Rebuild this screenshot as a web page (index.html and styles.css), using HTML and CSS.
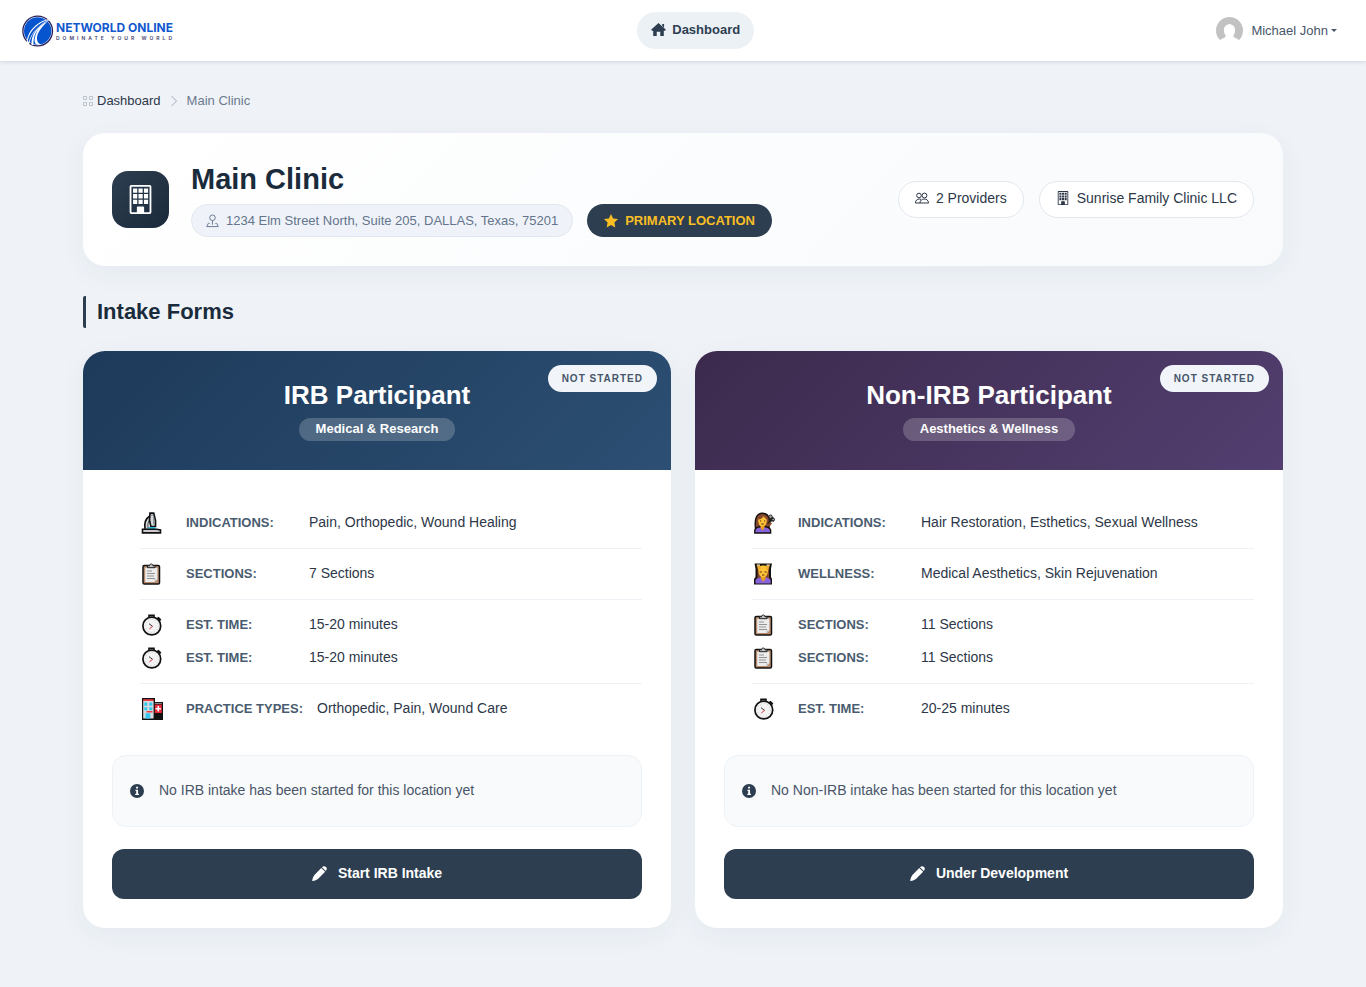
FILE: index.html
```html
<!DOCTYPE html>
<html lang="en">
<head>
<meta charset="utf-8">
<meta name="viewport" content="width=device-width, initial-scale=1">
<title>Main Clinic</title>
<link rel="stylesheet" href="styles.css">
</head>
<body>
<svg class="sprite" aria-hidden="true">
  <symbol id="building" viewBox="0 0 16 16">
    <path fill-rule="evenodd" d="M2 .9A.9.900 0 0 1 2.900 0h10.200a.9.900 0 0 1 .9.900v14.200a.9.900 0 0 1-.9.900H2.900a.9.900 0 0 1-.9-.900zM3 1v14h3v-2.700a.5.500 0 0 1 .5-.500h3a.5.500 0 0 1 .5.500V15h3V1z"/>
    <path d="M3.900 1.900h2.300v2.400H3.900zM6.900 1.900h2.300v2.400H6.900zM9.900 1.900h2.300v2.400H9.900zM3.900 5h2.300v2.400H3.900zM6.900 5h2.300v2.400H6.900zM9.900 5h2.300v2.400H9.900zM3.900 8.100h2.300v2.400H3.900zM6.900 8.100h2.300v2.400H6.900zM9.900 8.100h2.300v2.400H9.900zM6.300 12.200h3.400V16H6.300z"/>
  </symbol>
  <symbol id="pencil" viewBox="0 0 16 16">
    <path d="M9.900 2 14 6.100 6.600 13.500C5.200 14.700 2.900 15.500.6 15.900c-.3 0-.5-.1-.4-.4.5-2.300 1.300-4.600 2.600-6.100z"/>
    <path d="M10.600 1.300C12 0 13.700-.1 14.900 1.100s1.100 2.900-.2 4.300z"/>
  </symbol>
  <symbol id="info" viewBox="0 0 16 16">
    <circle cx="8" cy="8" r="8"/>
    <path class="knock" d="M7 3.200h2.200v2H7zM6.200 6.500h3v4.600h1.100v1.400H6V11.100h1.100V7.900h-.9z"/>
  </symbol>
  <symbol id="microscope" viewBox="0 0 22 22">
    <path d="M9.500 5C5.500 7.500 4.500 12 5.500 17" fill="none" stroke="#111" stroke-width="4.400"/>
    <path d="M9.500 5.500C6 8 5 12 5.800 17" fill="none" stroke="#d2d6da" stroke-width="1.900"/>
    <path d="M9 1.200h3.700l1.800 7.300v6H9.800L8.500 8z" fill="#d6dade" stroke="#111" stroke-width="1.700"/>
    <path d="M10 3.200h2.500M12.700 5.500v7" stroke="#8b9196" stroke-width="1.200"/>
    <path d="M7.500 16h7" stroke="#20b5dd" stroke-width="1.800"/>
    <path d="M1.500 17.300h14l4 .7v2.900h-18z" fill="#c9cdd1" stroke="#111" stroke-width="1.600"/>
  </symbol>
  <symbol id="clipboard" viewBox="0 0 22 22">
    <rect x="2" y="2.500" width="16.500" height="18.500" rx="1.300" fill="#b98a6c" stroke="#111" stroke-width="1.500"/>
    <path d="M4.200 4.700h12.200v11.800L13.800 19H4.200z" fill="#ececec"/>
    <path d="M13.500 19v-2.500H16" fill="#bbb"/>
    <path d="M6.500 4.700V2.800h2C8.700.4 11.800.4 12 2.800h2v1.900z" fill="#bfc3c6" stroke="#222" stroke-width="1"/>
    <path d="M6 8h5M6 10.500h8M6 13h7M6 15.500h8" stroke="#939393" stroke-width="1.100"/>
  </symbol>
  <symbol id="stopwatch" viewBox="0 0 22 22">
    <path d="M8 3.500V1.200h5v2.300M15.800 5l1.700-1.200 1.800 1.700L18 7.200" fill="#aaa" stroke="#111" stroke-width="1.600"/>
    <circle cx="10.800" cy="12" r="8.900" fill="#f3f3f3" stroke="#111" stroke-width="1.700"/>
    <circle cx="10.800" cy="12" r="6.500" fill="none" stroke="#c8c8c8" stroke-width="1" stroke-dasharray="1 2.300"/>
    <path d="M8 9.700l3.500 2.600" stroke="#333" stroke-width="1"/>
    <path d="M11.700 12.200 8.300 15" stroke="#e02b38" stroke-width="1"/>
  </symbol>
  <symbol id="hospital" viewBox="0 0 22 22">
    <path d="M1 0h13v4h8v18H1z" fill="#111"/>
    <path d="M2.200 3h10.400v17.500H2.200z" fill="#d4dbe0"/>
    <path d="M2.200 1.200h10.400V3H2.200zM5.500 13h6v1.600h-6z" fill="#f03c45"/>
    <path d="M3.300 4.500h3v3.200h-3zM8.300 4.500h3v3.200h-3zM3.300 9.200h3v3h-3zM8.300 9.200h3v3h-3zM4.500 15.200h4.800v5.300H4.500z" fill="#35c9ef"/>
    <path d="M13.800 6.500h7v8.500h-7z" fill="#e82939"/>
    <path d="M17.300 8v5.500M14.600 10.700h5.400" stroke="#fff" stroke-width="1.500"/>
    <path d="M13.800 5.400h7" stroke="#8d9499" stroke-width="1"/>
  </symbol>
  <symbol id="haircut" viewBox="0 0 22 22">
    <path d="M2.500 16C1.500 8 3 1.200 9.500 1.200c4 0 6.300 2.300 7 6.800L16 16z" fill="#87482d" stroke="#17110e" stroke-width="1.400"/>
    <path d="M1.800 21v-3c1-3 3.500-3.500 8-3.500s7 1 7.800 3.500v3z" fill="#8764dc" stroke="#17110e" stroke-width="1.400"/>
    <path d="M7.500 13h4v3l-2 2.500-2-2.500z" fill="#e89b20"/>
    <path d="M5.200 7.500C8 7.500 9.500 6 10.500 4.200c1 1.600 2.500 2.200 3.300 3.600 0 4.300-1.700 6.700-4.300 6.700S5.300 12 5.200 7.500z" fill="#ffc337"/>
    <path d="M7 9h1.200M11 9h1.200M8.300 12h2.500" stroke="#543116" stroke-width="1.200"/>
    <path d="m15 12 5.500-6.500M16 6l5 3" stroke="#222" stroke-width="2.200"/>
    <circle cx="17.500" cy="4.700" r="1.700" fill="#aaa" stroke="#222"/><circle cx="20.200" cy="7.500" r="1.300" fill="#aaa" stroke="#222"/>
    <path d="m15.500 14 2.500-3.500" stroke="#8d4b28" stroke-width="2.500"/>
  </symbol>
  <symbol id="massage" viewBox="0 0 22 22">
    <path d="M1.500.500h17.500l-1 5v8.500l1 2v5.500h-18v-5.500l1.500-2V5.500z" fill="#18120f"/>
    <path d="M4.500 17V4.500h11.500V17z" fill="#87482d"/>
    <path d="M2.500 20.500v-3.500c1.200-2 3.500-2.500 7.700-2.500s6.300.5 7.500 2.500v3.500z" fill="#8764dc"/>
    <path d="M8 13h4.500v3l-2.200 2.800L8 16z" fill="#e89b20"/>
    <path d="M5.500 4c2-2 7.500-2 9.500 0 .5 7-1.400 10.300-4.800 10.300S5 11 5.500 4z" fill="#ffc337"/>
    <path d="M3.500 1.700h3.300l1 3.800-2.300 2zM17 1.700h-3.300l-1 3.800 2.300 2z" fill="#efad29"/>
    <path d="M4 2h3M13.500 2h3" stroke="#c9cdd1" stroke-width="1"/>
    <path d="M6.700 9h2.200M11.500 9h2.200M9 12h2.400" stroke="#543116" stroke-width="1.100"/>
  </symbol>
</svg>

<header class="topbar">
  <a class="brand" href="#" aria-label="Networld Online">
    <svg class="brand-mark" viewBox="0 0 33 32" aria-hidden="true">
      <circle cx="15.700" cy="16" r="14.800" fill="#fff" stroke="#29215a" stroke-width="1.300"/>
      <circle cx="15.700" cy="16" r="13.700" fill="#0754cf"/>
      <path d="M4.500 29C5 16 15 5 32 3 20 7.500 9.500 16 7.200 29z" fill="#fff"/>
      <path d="M5.700 26C7.500 16 16 7.500 27 4.500 17.500 9.500 9.500 17 6.800 27z" fill="#0754cf"/>
      <path d="M9.500 30C9 20 14.500 11.500 25.500 6.500 17.500 14 14.500 19.500 15 24.500c.4 3 2 4.500 4.500 5-4.500 1.300-7-.5-7-4.500 1-7 3.500-11.500 7.500-14.500-6 4.500-9 11-8.500 19.500z" fill="#fff"/>
    </svg>
    <span class="brand-text"><span class="brand-name">NETWORLD ONLINE</span><span class="brand-tag">DOMINATE YOUR WORLD</span></span>
  </a>
  <nav class="main-nav">
    <a class="nav-pill" href="#">
      <svg class="icon-home" viewBox="0 0 16 14" aria-hidden="true"><path d="M8 0 16 7.200 15 8.300H13.700V14H9.900V9.500H6.100V14H2.300V8.300H1L0 7.200zM12 1h2v4l-2-2z"/></svg>
      Dashboard
    </a>
  </nav>
  <button class="user" type="button">
    <svg class="avatar" viewBox="0 0 27 27" aria-hidden="true">
      <circle cx="13.500" cy="13.500" r="13.500" fill="#c2c2c2"/>
      <path d="M13.500 7.300c3.500 0 5.600 2.500 5.600 6 0 2.400-.9 4.500-2 5.700 1 2 3.400 2 5.500 3.800l1 4.200H3.400l1-4.200C6.500 21 9 21 10 19c-1.200-1.200-2.100-3.300-2.100-5.700 0-3.500 2.100-6 5.600-6z" fill="#fff"/>
    </svg>
    Michael John<span class="caret"></span>
  </button>
</header>

<main class="page">
  <nav class="crumbs" aria-label="Breadcrumb">
    <svg class="icon-grid" viewBox="0 0 11 11" aria-hidden="true"><path d="M.5.500h3v3h-3zM6.500.500h3v3h-3zM.5 6.500h3v3h-3zM6.500 6.500h3v3h-3z"/></svg>
    <a class="crumb-link" href="#">Dashboard</a>
    <svg class="icon-chevron" viewBox="0 0 8 12" aria-hidden="true"><path d="m1.500 1 5 5-5 5"/></svg>
    <span class="crumb-current">Main Clinic</span>
  </nav>

  <section class="clinic">
    <div class="clinic-icon"><svg class="icon-lg" aria-hidden="true"><use href="#building"/></svg></div>
    <div class="clinic-info">
      <h1 class="clinic-name">Main Clinic</h1>
      <div class="clinic-meta">
        <span class="address">
          <svg class="icon-pin" viewBox="0 0 14 14" aria-hidden="true"><circle cx="7" cy="3.500" r="3"/><path d="M7 6.500V11M4 9.500H2.500L.8 13h12.400l-1.700-3.500H10"/></svg>
          1234 Elm Street North, Suite 205, DALLAS, Texas, 75201
        </span>
        <span class="primary">
          <svg class="icon-star" viewBox="0 0 14 14" aria-hidden="true"><path d="m7 0 2.100 4.500 4.900.6-3.600 3.400.9 5L7 11.100l-4.300 2.400.9-5L0 5.100l4.900-.6z"/></svg>
          PRIMARY LOCATION
        </span>
      </div>
    </div>
    <div class="chips">
      <span class="chip">
        <svg class="icon-people" viewBox="0 0 14 12" aria-hidden="true"><circle cx="4" cy="3.500" r="2.300"/><circle cx="9.500" cy="3.500" r="2.400"/><path d="M5 11C5 8.400 7 7 9.300 7s4.200 1.400 4.200 4zM5 11H.5C.5 8.400 2 7 4.500 7l1.500.4"/></svg>
        2 Providers
      </span>
      <span class="chip"><svg class="icon-sm" aria-hidden="true"><use href="#building"/></svg>Sunrise Family Clinic LLC</span>
    </div>
  </section>

  <h2 class="section-title">Intake Forms</h2>

  <div class="forms">
    <article class="form-card">
      <header class="form-head irb">
        <span class="status">NOT STARTED</span>
        <h3 class="form-title">IRB Participant</h3>
        <span class="form-kind">Medical &amp; Research</span>
      </header>
      <div class="form-body">
        <dl class="facts">
          <div class="fact"><svg class="emoji" aria-hidden="true"><use href="#microscope"/></svg><dt>INDICATIONS:</dt><dd>Pain, Orthopedic, Wound Healing</dd></div>
          <div class="fact"><svg class="emoji" aria-hidden="true"><use href="#clipboard"/></svg><dt>SECTIONS:</dt><dd>7 Sections</dd></div>
          <div class="fact joined"><svg class="emoji" aria-hidden="true"><use href="#stopwatch"/></svg><dt>EST. TIME:</dt><dd>15-20 minutes</dd></div>
          <div class="fact"><svg class="emoji" aria-hidden="true"><use href="#stopwatch"/></svg><dt>EST. TIME:</dt><dd>15-20 minutes</dd></div>
          <div class="fact"><svg class="emoji" aria-hidden="true"><use href="#hospital"/></svg><dt>PRACTICE TYPES:</dt><dd>Orthopedic, Pain, Wound Care</dd></div>
        </dl>
        <p class="notice"><svg class="icon-info" aria-hidden="true"><use href="#info"/></svg><span class="notice-text">No IRB intake has been started for this location yet</span></p>
        <button class="action" type="button"><svg class="icon-pencil" aria-hidden="true"><use href="#pencil"/></svg>Start IRB Intake</button>
      </div>
    </article>

    <article class="form-card">
      <header class="form-head non-irb">
        <span class="status">NOT STARTED</span>
        <h3 class="form-title">Non-IRB Participant</h3>
        <span class="form-kind">Aesthetics &amp; Wellness</span>
      </header>
      <div class="form-body">
        <dl class="facts">
          <div class="fact"><svg class="emoji" aria-hidden="true"><use href="#haircut"/></svg><dt>INDICATIONS:</dt><dd>Hair Restoration, Esthetics, Sexual Wellness</dd></div>
          <div class="fact"><svg class="emoji" aria-hidden="true"><use href="#massage"/></svg><dt>WELLNESS:</dt><dd>Medical Aesthetics, Skin Rejuvenation</dd></div>
          <div class="fact joined"><svg class="emoji" aria-hidden="true"><use href="#clipboard"/></svg><dt>SECTIONS:</dt><dd>11 Sections</dd></div>
          <div class="fact"><svg class="emoji" aria-hidden="true"><use href="#clipboard"/></svg><dt>SECTIONS:</dt><dd>11 Sections</dd></div>
          <div class="fact"><svg class="emoji" aria-hidden="true"><use href="#stopwatch"/></svg><dt>EST. TIME:</dt><dd>20-25 minutes</dd></div>
        </dl>
        <p class="notice"><svg class="icon-info" aria-hidden="true"><use href="#info"/></svg><span class="notice-text">No Non-IRB intake has been started for this location yet</span></p>
        <button class="action" type="button"><svg class="icon-pencil" aria-hidden="true"><use href="#pencil"/></svg>Under Development</button>
      </div>
    </article>
  </div>
</main>
</body>
</html>
```
FILE: styles.css
```css
* { box-sizing: border-box; }

body {
  margin: 0;
  min-height: 100vh;
  background: #eff3f8;
  color: #2d3748;
  font: 14px/20px "Liberation Sans", Arial, sans-serif;
}

h1, h2, h3, p, dl, dd { margin: 0; }
a { color: inherit; text-decoration: none; }
button { border: 0; font: inherit; cursor: pointer; }
svg { flex: none; fill: currentColor; }
.sprite { position: absolute; width: 0; height: 0; }

/* Top bar */
.topbar {
  display: flex;
  align-items: center;
  justify-content: space-between;
  padding: 12px 29px 12px 22px;
  background: #fff;
  box-shadow: 0 1px 4px rgba(45, 61, 80, 0.16);
}
.brand { display: flex; align-items: center; gap: 1px; }
.brand-mark { width: 33px; height: 32px; }
.brand-text { display: flex; flex-direction: column; }
.brand-name { color: #1259cf; font: 700 12px/14px Inter, sans-serif; }
.brand-tag { color: #43406b; font: 600 5px/6px Inter, sans-serif; letter-spacing: 3px; }
.nav-pill {
  display: flex;
  align-items: center;
  gap: 6px;
  padding: 7px 14px 9px;
  border-radius: 24px;
  background: #ecf1f6;
  color: #2d3e50;
  font-size: 13px;
  font-weight: 600;
  line-height: 21px;
}
.icon-home { width: 15px; height: 13px; }
.user {
  display: flex;
  align-items: center;
  gap: 8px;
  padding: 0;
  background: none;
  color: #4a5568;
  font-size: 13px;
}
.avatar { width: 27px; height: 27px; }
.caret {
  margin-left: -5px;
  border: 3px solid transparent;
  border-top-color: currentColor;
  border-bottom: 0;
}

/* Page */
.page { max-width: 1200px; margin: 0 auto; padding: 30px 0; }
.crumbs { display: flex; align-items: center; color: #6c7a8c; font-size: 13px; }
.icon-grid { width: 11px; height: 11px; margin-right: 3px; fill: none; stroke: #bcc3cc; }
.crumb-link { color: #2d3748; }
.icon-chevron { width: 8px; height: 12px; margin: 0 9px; fill: none; stroke: #a3acb8; }

.clinic {
  display: flex;
  align-items: center;
  gap: 22px;
  margin-top: 22px;
  padding: 28px 29px 29px;
  border-radius: 22px;
  background: linear-gradient(135deg, #fff, #f8fafc);
  box-shadow: 0 7px 28px rgba(45, 61, 80, 0.05);
}
.clinic-icon {
  display: grid;
  place-items: center;
  width: 57px;
  height: 57px;
  border-radius: 16px;
  background: linear-gradient(135deg, #2d3e50, #1a2a3a);
  color: #fff;
}
.icon-lg { width: 29px; height: 29px; }
.clinic-name { color: #1a2b3c; font-size: 29px; line-height: 36px; }
.clinic-meta { display: flex; flex-wrap: wrap; gap: 14px; margin-top: 7px; }
.address, .primary {
  display: flex;
  align-items: center;
  gap: 7px;
  min-height: 33px;
  padding: 0 14px;
  border-radius: 24px;
  font-size: 13px;
}
.address { border: 1px solid #e2e8f0; background: #eff3f9; color: #64748b; }
.icon-pin { width: 13px; height: 14px; fill: none; stroke: currentColor; }
.primary { padding: 0 17px; background: #2d3e50; color: #fbbf24; font-weight: 700; }
.icon-star { width: 14px; height: 14px; }
.chips { display: flex; gap: 15px; margin-left: auto; }
.chip {
  display: flex;
  align-items: center;
  gap: 7px;
  padding: 7px 16px 9px;
  border: 1px solid #e2e8f0;
  border-radius: 24px;
  background: #fff;
  line-height: 19px;
}
.icon-people { width: 14px; height: 12px; fill: none; stroke: currentColor; }
.icon-sm { width: 14px; height: 14px; }

.section-title {
  margin: 30px 0 23px;
  padding-left: 11px;
  border-left: 3px solid #2d3e50;
  border-radius: 2px;
  color: #1a2b3c;
  font-size: 22px;
  line-height: 32px;
}

/* Intake form cards */
.forms { display: grid; grid-template-columns: repeat(auto-fit, minmax(480px, 1fr)); gap: 24px; }
.form-card {
  overflow: hidden;
  border-radius: 22px;
  background: #fff;
  box-shadow: 0 7px 28px rgba(45, 61, 80, 0.05);
}
.form-head {
  position: relative;
  display: flex;
  flex-direction: column;
  align-items: center;
  padding: 28px 28px 29px;
  color: #fff;
}
.irb { background: linear-gradient(135deg, #1e3a5a, #2c4f73); }
.non-irb { background: linear-gradient(135deg, #3c2a4d, #523f70); }
.form-title { font-size: 26px; line-height: 32px; }
.form-kind {
  margin-top: 7px;
  padding: 1px 17px 2px;
  border-radius: 16px;
  background: rgba(255, 255, 255, 0.2);
  font-size: 13px;
  font-weight: 700;
}
.status {
  position: absolute;
  top: 14px;
  right: 14px;
  padding: 4px 14px;
  border-radius: 16px;
  background: #f1f5f9;
  color: #475569;
  font-size: 10px;
  font-weight: 700;
  line-height: 19px;
  letter-spacing: 1px;
}
.form-body { padding: 28px 29px 29px; }
.facts { padding-left: 28px; }
.fact {
  display: flex;
  align-items: center;
  gap: 14px;
  padding: 14px 0;
  border-bottom: 1px solid #edf0f5;
}
.fact:last-child { border-bottom: 0; }
.joined { padding-bottom: 11px; border-bottom: 0; }
.joined + .fact { padding-top: 0; }
.emoji { width: 22px; height: 22px; margin: 0 9px 0 1px; }
.fact dt { min-width: 109px; color: #4a5c70; font-size: 13px; font-weight: 700; line-height: 22px; }
.fact dd { padding-bottom: 2px; }
.notice {
  display: flex;
  align-items: center;
  gap: 15px;
  min-height: 72px;
  margin: 21px 0 22px;
  padding: 0 17px;
  border: 1px solid #edf2f7;
  border-radius: 14px;
  background: #f8fafc;
  color: #4a5568;
}
.notice-text { padding-bottom: 2px; }
.icon-info { width: 14px; height: 14px; color: #2d3e50; }
.knock { fill: #fff; }
.action {
  display: flex;
  align-items: center;
  justify-content: center;
  gap: 11px;
  width: 100%;
  min-height: 50px;
  padding: 0 16px 2px;
  border-radius: 12px;
  background: #2d3e50;
  color: #fff;
  font-weight: 700;
}
.icon-pencil { width: 15px; height: 15px; }
```
